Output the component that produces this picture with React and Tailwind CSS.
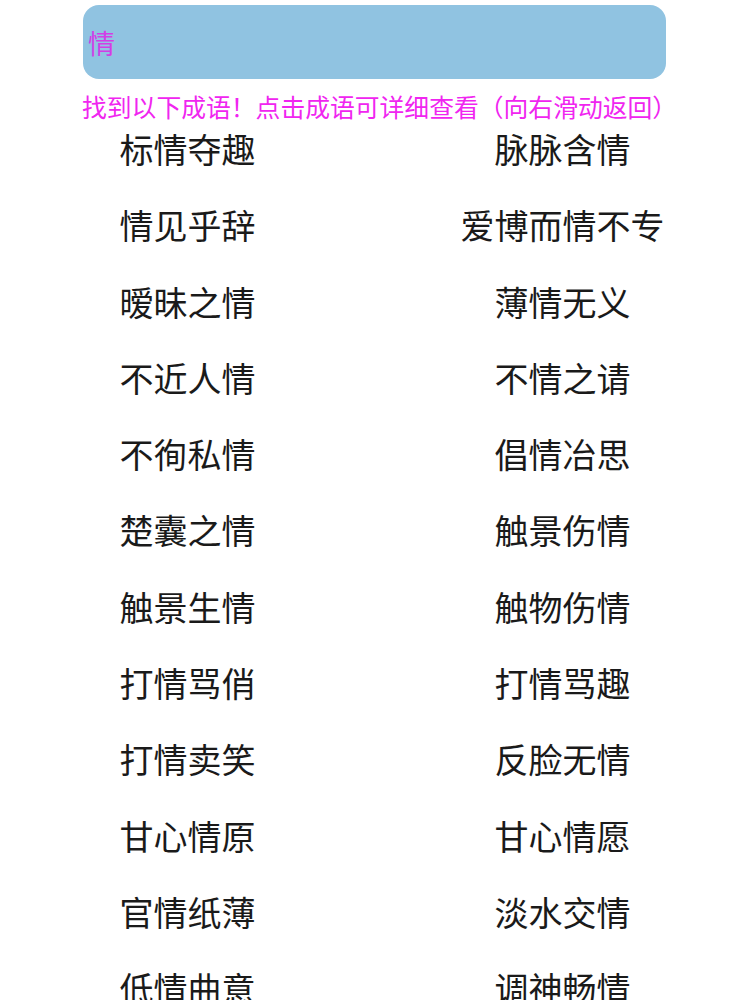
const idioms = [
  ["标情夺趣", "脉脉含情"],
  ["情见乎辞", "爱博而情不专"],
  ["暧昧之情", "薄情无义"],
  ["不近人情", "不情之请"],
  ["不徇私情", "倡情冶思"],
  ["楚囊之情", "触景伤情"],
  ["触景生情", "触物伤情"],
  ["打情骂俏", "打情骂趣"],
  ["打情卖笑", "反脸无情"],
  ["甘心情原", "甘心情愿"],
  ["官情纸薄", "淡水交情"],
  ["低情曲意", "调神畅情"],
];

export default function App() {
  return (
    <div
      className="w-[750px] h-[1000px] overflow-hidden bg-white"
      style={{ fontFamily: '"Noto Sans CJK SC", "Noto Sans", sans-serif' }}
    >
      {/* Search box */}
      <div className="mt-[5px] ml-[83px] w-[583px] h-[74px] rounded-[16px] bg-[#90c3e1] flex items-center pl-[5px]">
        <span className="text-[27px] leading-none text-[#d23ee6]">情</span>
      </div>

      {/* Hint */}
      <div className="ml-[82px] mt-[15px] text-[24.8px] leading-[24px] text-[#f025f0] whitespace-nowrap">
        找到以下成语！点击成语可详细查看（向右滑动返回）
      </div>

      {/* Idiom list */}
      <div className="-mt-[7px] grid grid-cols-2">
        {idioms.map(([left, right]) => (
          <div key={left} className="contents">
            <div className="h-[76.3px] leading-[76px] text-center text-[34px] text-[#1a1a1a]">
              {left}
            </div>
            <div className="h-[76.3px] leading-[76px] text-center text-[34px] text-[#1a1a1a]">
              {right}
            </div>
          </div>
        ))}
      </div>
    </div>
  );
}
